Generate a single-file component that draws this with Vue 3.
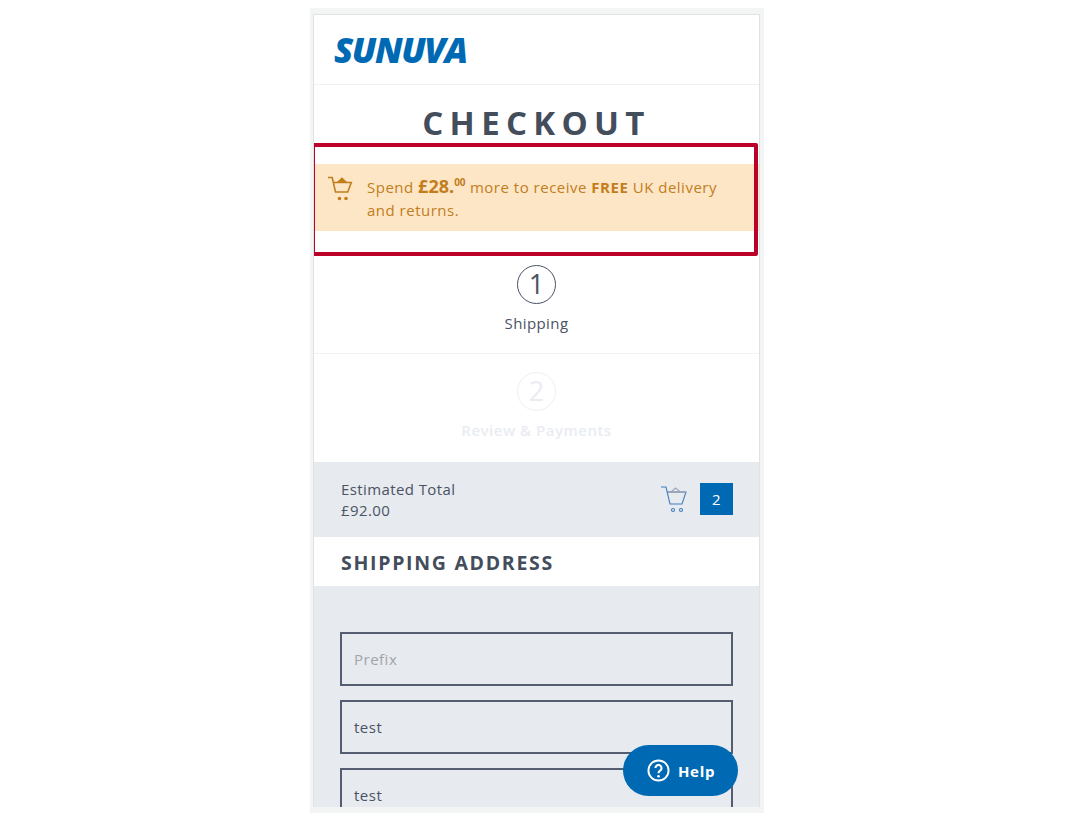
<script setup>
const fields = [
  { id: 'prefix', value: '', placeholder: 'Prefix' },
  { id: 'first', value: 'test', placeholder: '' },
  { id: 'last', value: 'test', placeholder: '' },
]
</script>

<template>
  <div class="frame">
    <div class="inner">
      <header class="top"><span class="logo">SUNUVA</span></header>
      <h1 class="title">CHECKOUT</h1>
      <div class="promo-wrap">
        <div class="promo">
          <svg class="promo-icon" viewBox="0 0 26 26" width="26" height="26" fill="none" stroke="#c27d1c" stroke-width="1.6">
            <path d="M1 1.5h4.2l3.3 14.5h12.2l3.6-9.5H6.6" />
            <path d="M11 6.5l4-4 4 4" />
            <path d="M11 6.2l4-3.4 4 3.4z" fill="#c27d1c" />
            <circle cx="12.5" cy="22.5" r="1.8" fill="#c27d1c" stroke="none" />
            <circle cx="19" cy="22.5" r="1.8" fill="#c27d1c" stroke="none" />
          </svg>
          <p>Spend <b class="amount">£28.<sup>00</sup></b> more to receive <b>FREE</b> UK delivery and returns.</p>
        </div>
        <div class="highlight"></div>
      </div>
      <div class="step">
        <span class="num">1</span>
        <span class="label">Shipping</span>
      </div>
      <div class="step off">
        <span class="num">2</span>
        <span class="label">Review &amp; Payments</span>
      </div>
      <div class="total">
        <div>Estimated Total<br />£92.00</div>
        <div class="cart">
          <svg viewBox="0 0 28 28" width="28" height="28" fill="none" stroke="#3f7fc0" stroke-width="1.1">
            <path d="M1 2h5l4 17h12l4-12H7.5" />
            <path d="M11 7l4.500-4 5 4" stroke="#9aa6ba" />
            <path d="M8 7h18" stroke="#9aa6ba" stroke-width="2" />
            <circle cx="13" cy="25" r="1.500" />
            <circle cx="21" cy="25" r="1.500" />
          </svg>
          <span class="count">2</span>
        </div>
      </div>
      <h2 class="heading">SHIPPING ADDRESS</h2>
      <form class="form">
        <input v-for="f in fields" :key="f.id" class="field" :value="f.value" :placeholder="f.placeholder" />
      </form>
      <button class="help" type="button">
        <svg viewBox="0 0 24 24" width="23" height="23" fill="none" stroke="#fff" stroke-width="2">
          <circle cx="12" cy="12" r="10.500" />
          <path d="M8.800 9.400a3.200 3.200 0 1 1 4.900 2.700c-1.200.8-1.700 1.300-1.700 2.700" stroke-width="2.200" />
          <circle cx="12" cy="18" r="1.400" fill="#fff" stroke="none" />
        </svg>
        <span>Help</span>
      </button>
    </div>
  </div>
</template>

<style>
html, body { margin: 0; background: #fff; overflow: hidden; }
</style>

<style scoped>
.frame {
  box-sizing: border-box;
  width: 454px;
  height: 805px;
  margin: 8px 0 0 310px;
  padding: 6px 4px 6px 3px;
  background: #f3f4f4;
  font-family: "Open Sans", sans-serif;
  color: #4a5364;
}
.inner {
  position: relative;
  box-sizing: border-box;
  height: 100%;
  overflow: hidden;
  background: #fff;
  border: 1px solid #e1e3e3;
  border-bottom: 0;
}
.top {
  box-sizing: border-box;
  height: 70px;
  padding: 0 20px;
  display: flex;
  align-items: center;
  border-bottom: 1px solid #eef0f4;
}
.logo {
  font-family: "Open Sans", sans-serif;
  font-size: 35px;
  font-weight: 800;
  font-style: italic;
  letter-spacing: -1.4px;
  line-height: 1;
  color: #0069b4;
}
.title {
  margin: 0;
  height: 58px;
  font-size: 33px;
  line-height: 76px;
  font-weight: 700;
  letter-spacing: 6.300px;
  text-align: center;
  color: #434d5c;
}
.promo-wrap {
  position: relative;
  padding: 21px 0 25px;
}
.promo {
  box-sizing: border-box;
  height: 67px;
  display: flex;
  padding: 11px 20px 0 13px;
  background: #fde6c6;
  color: #c27d1c;
}
.promo-icon { flex: none; margin-top: 1px; }
.promo p {
  margin: 0 0 0 14px;
  font-size: 15px;
  line-height: 23px;
  letter-spacing: 0.5px;
}
.promo b { font-weight: 700; }
.amount { font-size: 18px; letter-spacing: 0; }
.amount sup { font-size: 10px; line-height: 0; }
.highlight {
  position: absolute;
  left: -3px;
  right: 1px;
  top: 0;
  height: 113px;
  box-sizing: border-box;
  border: 4px solid #bb0029;
  border-radius: 2px;
}
.step {
  box-sizing: border-box;
  height: 98px;
  padding-top: 9px;
  display: flex;
  flex-direction: column;
  align-items: center;
  border-bottom: 1px solid #f1f3f5;
}
.step.off {
  height: 108px;
  padding-top: 18px;
  border-bottom: 0;
  color: #e9ecf1;
}
.num {
  box-sizing: border-box;
  width: 39px;
  height: 39px;
  border: 1px solid #4a5364;
  border-radius: 50%;
  font-size: 27px;
  line-height: 36px;
  text-align: center;
}
.off .num { border-color: #eceff3; }
.label {
  margin-top: 8px;
  font-size: 15px;
  line-height: 22px;
  letter-spacing: 0.4px;
}
.off .label { font-weight: 600; letter-spacing: 0.5px; }
.total {
  box-sizing: border-box;
  height: 75px;
  padding: 17px 26px 0 27px;
  display: flex;
  justify-content: space-between;
  background: #e7eaef;
  font-size: 15px;
  line-height: 21px;
  letter-spacing: 0.4px;
}
.cart { display: flex; gap: 12px; align-items: flex-start; margin-top: 4px; }
.cart svg { margin-top: 2px; }
.count {
  width: 33px;
  height: 32px;
  background: #0069b4;
  color: #fff;
  font-size: 15px;
  line-height: 32px;
  text-align: center;
}
.heading {
  margin: 0;
  height: 49px;
  padding-left: 27px;
  font-size: 19.500px;
  line-height: 52px;
  font-weight: 700;
  letter-spacing: 1.700px;
  color: #434d5c;
}
.form {
  display: flex;
  flex-direction: column;
  gap: 14px;
  height: 300px;
  padding: 46px 26px 0;
  background: #e7eaef;
}
.field {
  box-sizing: border-box;
  flex: none;
  width: 100%;
  height: 54px;
  padding: 0 12px;
  border: 2px solid #555e70;
  border-radius: 0;
  background: transparent;
  font: 15px "Open Sans", sans-serif;
  letter-spacing: 0.5px;
  color: #4a5364;
  outline: none;
}
.field::placeholder { color: #a3a5a8; opacity: 1; }
.help {
  position: absolute;
  left: 309px;
  top: 730px;
  width: 115px;
  height: 51px;
  padding: 0 0 0 1px;
  display: flex;
  align-items: center;
  justify-content: center;
  gap: 8px;
  border: 0;
  border-radius: 26px;
  background: #0069b4;
  color: #fff;
  font: 700 15px "Open Sans", sans-serif;
  letter-spacing: 0.7px;
}
</style>
